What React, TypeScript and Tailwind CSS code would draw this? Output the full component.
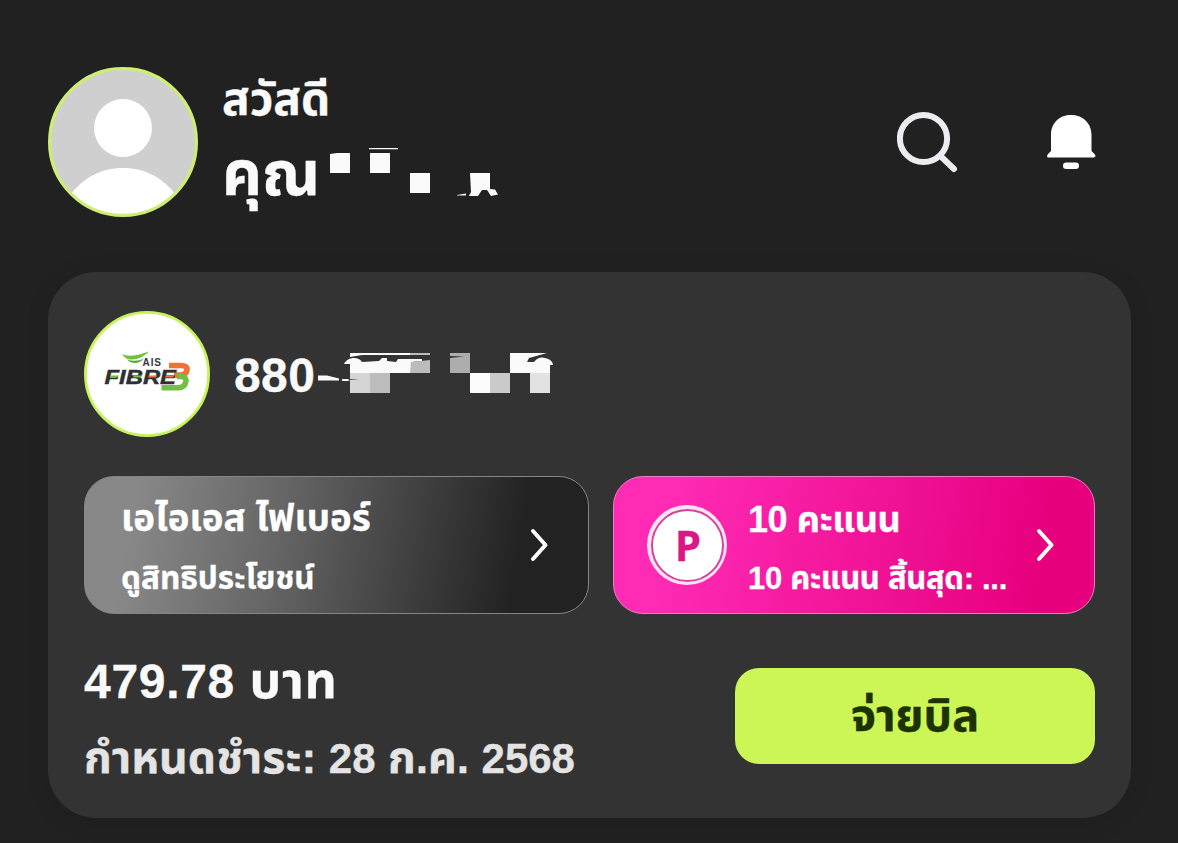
import type { ReactNode } from "react";

function Chevron() {
  return (
    <svg width="20" height="36" viewBox="0 0 20 36" fill="none" className="shrink-0">
      <path d="M3 4 15.500 18 3 32" stroke="#fff" strokeWidth="4" strokeLinecap="round" strokeLinejoin="round" />
    </svg>
  );
}

function Avatar() {
  return (
    <svg width="150" height="150" viewBox="0 0 150 150" className="shrink-0">
      <clipPath id="avatar">
        <circle cx="75" cy="75" r="73" />
      </clipPath>
      <circle cx="75" cy="75" r="73.5" fill="#cfcfcf" />
      <g clipPath="url(#avatar)" fill="#fff">
        <circle cx="75" cy="61" r="29" />
        <path d="M23 127C35 111 53 101 75 101s40 10 52 26v25H23Z" />
      </g>
      <circle cx="75" cy="75" r="73.4" fill="none" stroke="#cdee72" strokeWidth="3.2" />
    </svg>
  );
}

// Pixelated part of the customer name
function HiddenName() {
  return (
    <svg width="200" height="60" viewBox="310 137 200 60" fill="#fafafa" className="shrink-0">
      <path d="M330 154 337 153h13v20h-20ZM370 153h20v20h-20ZM369 148h29v1.2h-29ZM410 173h20v20h-20Z" />
      <path d="M470 173h20v16l5 .5 3 5-7 1.500-4-6h-5l-4 6h-9l2-4ZM457 195l9-1.500v2h-9Z" />
    </svg>
  );
}

// Pixelated part of the account number
function HiddenNumber() {
  return (
    <svg width="250" height="50" viewBox="317 349 250 50" className="shrink-0">
      <g fill="#fafafa">
        <path d="M318 375.500h9l12 3v2h-21ZM342 379h6l2 1-2 1h-6Z" />
        <path d="M344 364c2-4 6-6 10-6s7 2 8 4l17-1 3-3h5v3l9 1 2-3h24v2l-10 1v11h-62v-9Z" />
        <path d="M350 353h60v2h-48l-12 2Z" />
        <path d="M510 353h37l-18 5-2 4h7c4-5 8-5 11-4 5 1 8 4 8 7h-3v8h-40Z" />
      </g>
      <path d="M410 353h20v2h-20ZM411 362l19-2v13h-20Z" fill="#bcbcbc" />
      <path d="M350 373h20v20h-20Z" fill="#d5d5d5" />
      <path d="M370 373h20v20h-20Z" fill="#bcbcbc" />
      <path d="M450 353h20v20h-20Z" fill="#adadad" />
      <path d="m450 356 14 .5-14 1.500ZM348 380l11-.5-9-.5Z" fill="#333" />
      <path d="M470 373h20v20h-20Z" fill="#fcfcfc" />
      <path d="M490 373h20v20h-20Z" fill="#cacaca" />
      <path d="M530 373h20v20h-20Z" fill="#e2e2e2" />
    </svg>
  );
}

function FibreLogo() {
  return (
    <svg width="126" height="126" viewBox="0 0 126 126" className="shrink-0">
      <circle cx="63" cy="63" r="61.6" fill="#fff" stroke="#c6f45a" strokeWidth="2.8" />
      <path d="M38 43c6 3 14 2 27-2.500-5 5-11 8-17 8-5 0-8-2-10-5.500Z" fill="#72bf44" />
      <path d="M43 48.500c6 2 12 1.500 17-1-3 3.500-6 4.500-9 4.500s-6-1-8-3.500Z" fill="#5aa838" />
      <g fill="none" strokeWidth="5.600">
        <path d="M85 54.500H97c4.500 0 6.500 1.600 6 4.500-.6 3.400-3 5-6.500 5.100H90" stroke="#ee7435" />
        <path d="M93 65.500h4c4 .3 5.400 2.200 4.900 5-.8 4.500-3.200 6.200-7.900 6.200H77.500" stroke="#72bf44" />
      </g>
      <text x="58.500" y="55" fontFamily="Liberation Sans" fontSize="10" fontWeight="700" fill="#38383b" textLength="18.500">
        AIS
      </text>
      <text
        x="20.500"
        y="72.500"
        fontFamily="Liberation Sans"
        fontSize="20.500"
        fontWeight="700"
        fontStyle="italic"
        fill="#303034"
        stroke="#303034"
        strokeWidth="0.5"
        textLength="71.500"
        lengthAdjust="spacingAndGlyphs"
      >
        FIBRE
      </text>
      <path d="M26 64.500h9l-3 2.500h-6ZM50 64.500h8l-1 2h-8Z" fill="#72bf44" />
      <path d="M65 64.500h8l-1 2h-8ZM82 64.500h8l-1 2h-8Z" fill="#ee7435" />
    </svg>
  );
}

function PointBadge() {
  return (
    <div className="flex size-20 shrink-0 items-center justify-center rounded-full bg-[#ffe3f5]">
      <div className="flex size-[73px] items-center justify-center rounded-full border-2 border-[#d9429c] bg-white">
        <span className="pl-0.5 font-['Open_Sans',sans-serif] text-[42px] leading-none text-[#db1785]">P</span>
      </div>
    </div>
  );
}

function Tile({ className, children }: { className: string; children: ReactNode }) {
  return (
    <button className={`flex h-[138px] items-center rounded-[30px] border-[1.5px] text-left text-white ${className}`}>
      {children}
    </button>
  );
}

export default function App() {
  return (
    <main className="h-[843px] w-[1178px] overflow-hidden bg-[#212121] px-12 pt-[67px] font-['Liberation_Sans','Noto_Sans_Thai',sans-serif] font-bold whitespace-nowrap text-[#fafafa] [-webkit-text-stroke-width:0.3px]">
      <header className="flex h-[150px] items-center">
        <Avatar />
        <div className="ml-6 h-[150px] w-[675px]">
          <p className="h-[70px] text-[46px] leading-[64px]">สวัสดี</p>
          <div className="flex h-20">
            <p className="w-[88px] text-[62px] leading-[74px]">คุณ</p>
            <HiddenName />
          </div>
        </div>
        <svg width="62" height="62" viewBox="0 0 62 62" fill="none" stroke="#ececf0" className="shrink-0">
          <circle cx="26.500" cy="27.500" r="23.600" strokeWidth="6" />
          <path d="m44 45.500 13 12.500" strokeWidth="6" strokeLinecap="round" />
        </svg>
        <svg width="50" height="56" viewBox="0 0 50 56" fill="#fff" className="ml-[88px] shrink-0">
          <path d="M4 21C4 8.500 13 1 24 1s20.500 7.500 20.500 20v16l3 3c2 2 .5 3.500-1 3.500h-45C0 43.500-.5 42 1 40l3-3Z" />
          <rect x="16" y="48.500" width="16" height="6.500" rx="3.200" />
        </svg>
      </header>

      <section className="mt-[55px] h-[546px] w-[1083px] rounded-[48px] bg-[#333] px-9 pt-[39px] shadow-[0_4px_24px_rgba(0,0,0,0.12)]">
        <div className="flex h-[126px] items-center">
          <FibreLogo />
          <span className="ml-6 w-[83px] pt-1 text-[48px] leading-none tracking-[0.4px]">880</span>
          <HiddenNumber />
        </div>

        <div className="mt-[39px] flex gap-6">
          <Tile className="w-[505px] justify-between border-[#858585] bg-linear-[100deg,#888_10%,#666_38%,#222_85%] pr-[38px] pl-9">
            <span className="flex flex-col pt-1">
              <span className="text-[36.7px] leading-[62px]">เอไอเอส ไฟเบอร์</span>
              <span className="text-[31.5px] leading-[56px]">ดูสิทธิประโยชน์</span>
            </span>
            <Chevron />
          </Tile>
          <Tile className="w-[482px] border-[#ee7fbd] bg-linear-[100deg,#ff2bb5_12%,#e6007e_88%] pl-[33px]">
            <PointBadge />
            <span className="ml-[21px] flex w-[288px] flex-col pt-1.5">
              <span className="text-[36px] leading-[62px] tracking-[-0.4px]">10 คะแนน</span>
              <span className="text-[31px] leading-[56px] tracking-[-0.3px]">10 คะแนน สิ้นสุด: ...</span>
            </span>
            <Chevron />
          </Tile>
        </div>

        <div className="mt-[30px] flex items-center justify-between">
          <div>
            <p className="h-[76px] text-[48px] leading-[74px] tracking-[0.7px]">
              479.78<span className="text-[50px]"> บาท</span>
            </p>
            <p className="h-[76px] text-[44.5px] leading-[76px] text-[#e4e4e4]">
              <span className="tracking-[0.1px]">กำหนดชำระ: </span>
              <span className="text-[42px]">28</span> ก.ค. <span className="text-[42px]">2568</span>
            </p>
          </div>
          <button className="h-24 w-[360px] -translate-y-1 rounded-3xl bg-[#ccf656] text-[45px] text-[#1c3300]">จ่ายบิล</button>
        </div>
      </section>
    </main>
  );
}
